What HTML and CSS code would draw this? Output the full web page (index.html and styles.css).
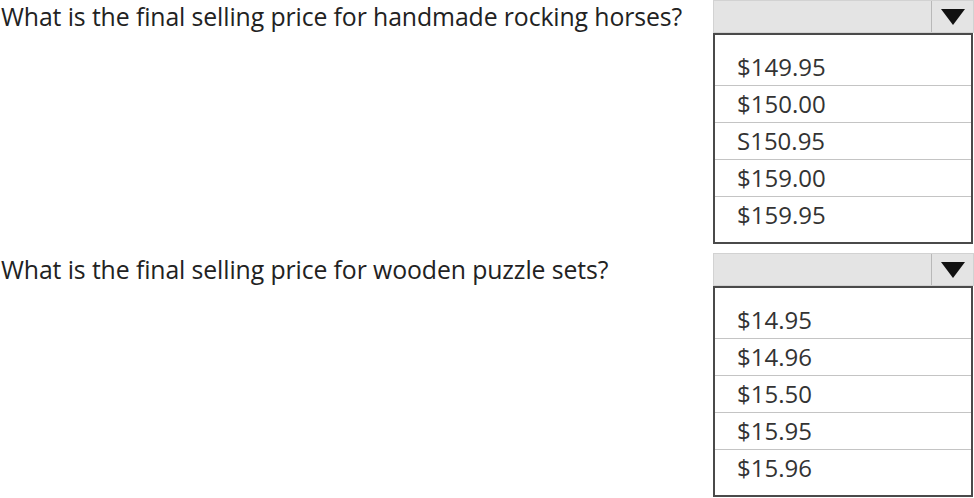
FILE: index.html
```html
<!DOCTYPE html>
<html lang="en">

<head>
    <meta charset="UTF-8">
    <title>Final Selling Price</title>
    <link rel="stylesheet" href="styles.css">
</head>

<body>
    <div class="question">
        <p class="question-text">What is the final selling price for handmade rocking horses?</p>
        <div class="dropdown">
            <div class="dropdown-head">
                <span class="dropdown-value"></span>
                <span class="dropdown-arrow"></span>
            </div>
            <ul class="dropdown-list">
                <li>$149.95</li>
                <li>$150.00</li>
                <li>S150.95</li>
                <li>$159.00</li>
                <li>$159.95</li>
            </ul>
        </div>
    </div>

    <div class="question">
        <p class="question-text">What is the final selling price for wooden puzzle sets?</p>
        <div class="dropdown">
            <div class="dropdown-head">
                <span class="dropdown-value"></span>
                <span class="dropdown-arrow"></span>
            </div>
            <ul class="dropdown-list">
                <li>$14.95</li>
                <li>$14.96</li>
                <li>$15.50</li>
                <li>$15.95</li>
                <li>$15.96</li>
            </ul>
        </div>
    </div>
</body>

</html>
```

FILE: styles.css
```css
body {
    font-family: 'Open Sans', 'Noto Sans', sans-serif;
    margin: 0;
    padding: 0;
    background: #ffffff;
    color: #222222;
}

.question {
    display: flex;
    align-items: flex-start;
    margin-bottom: 9px;
}

.question-text {
    flex: 1;
    margin: 0;
    padding: 0 0 0 1px;
    font-size: 24.8px;
    line-height: 32px;
    letter-spacing: -0.1px;
}

.dropdown {
    width: 260px;
    margin-right: 1px;
}

.dropdown-head {
    display: flex;
    height: 31px;
    background: #e4e4e4;
    border: 1px solid #d2d2d2;
    margin-right: -1px;
}

.dropdown-value {
    flex: 1;
}

.dropdown-arrow {
    width: 41px;
    border-left: 1px solid #b8b8b8;
    display: flex;
    align-items: center;
    justify-content: center;
}

.dropdown-arrow::after {
    content: "";
    border-left: 12px solid transparent;
    border-right: 12px solid transparent;
    border-top: 16px solid #111111;
}

.dropdown-list {
    list-style: none;
    margin: 0;
    padding: 14px 0 9px;
    border: 2px solid #4a4a4a;
}

.dropdown-list li {
    height: 36px;
    line-height: 36px;
    padding-left: 22px;
    font-size: 24px;
    color: #333333;
    border-bottom: 1px solid #c4c4c4;
}

.dropdown-list li:last-child {
    border-bottom: none;
}
```
